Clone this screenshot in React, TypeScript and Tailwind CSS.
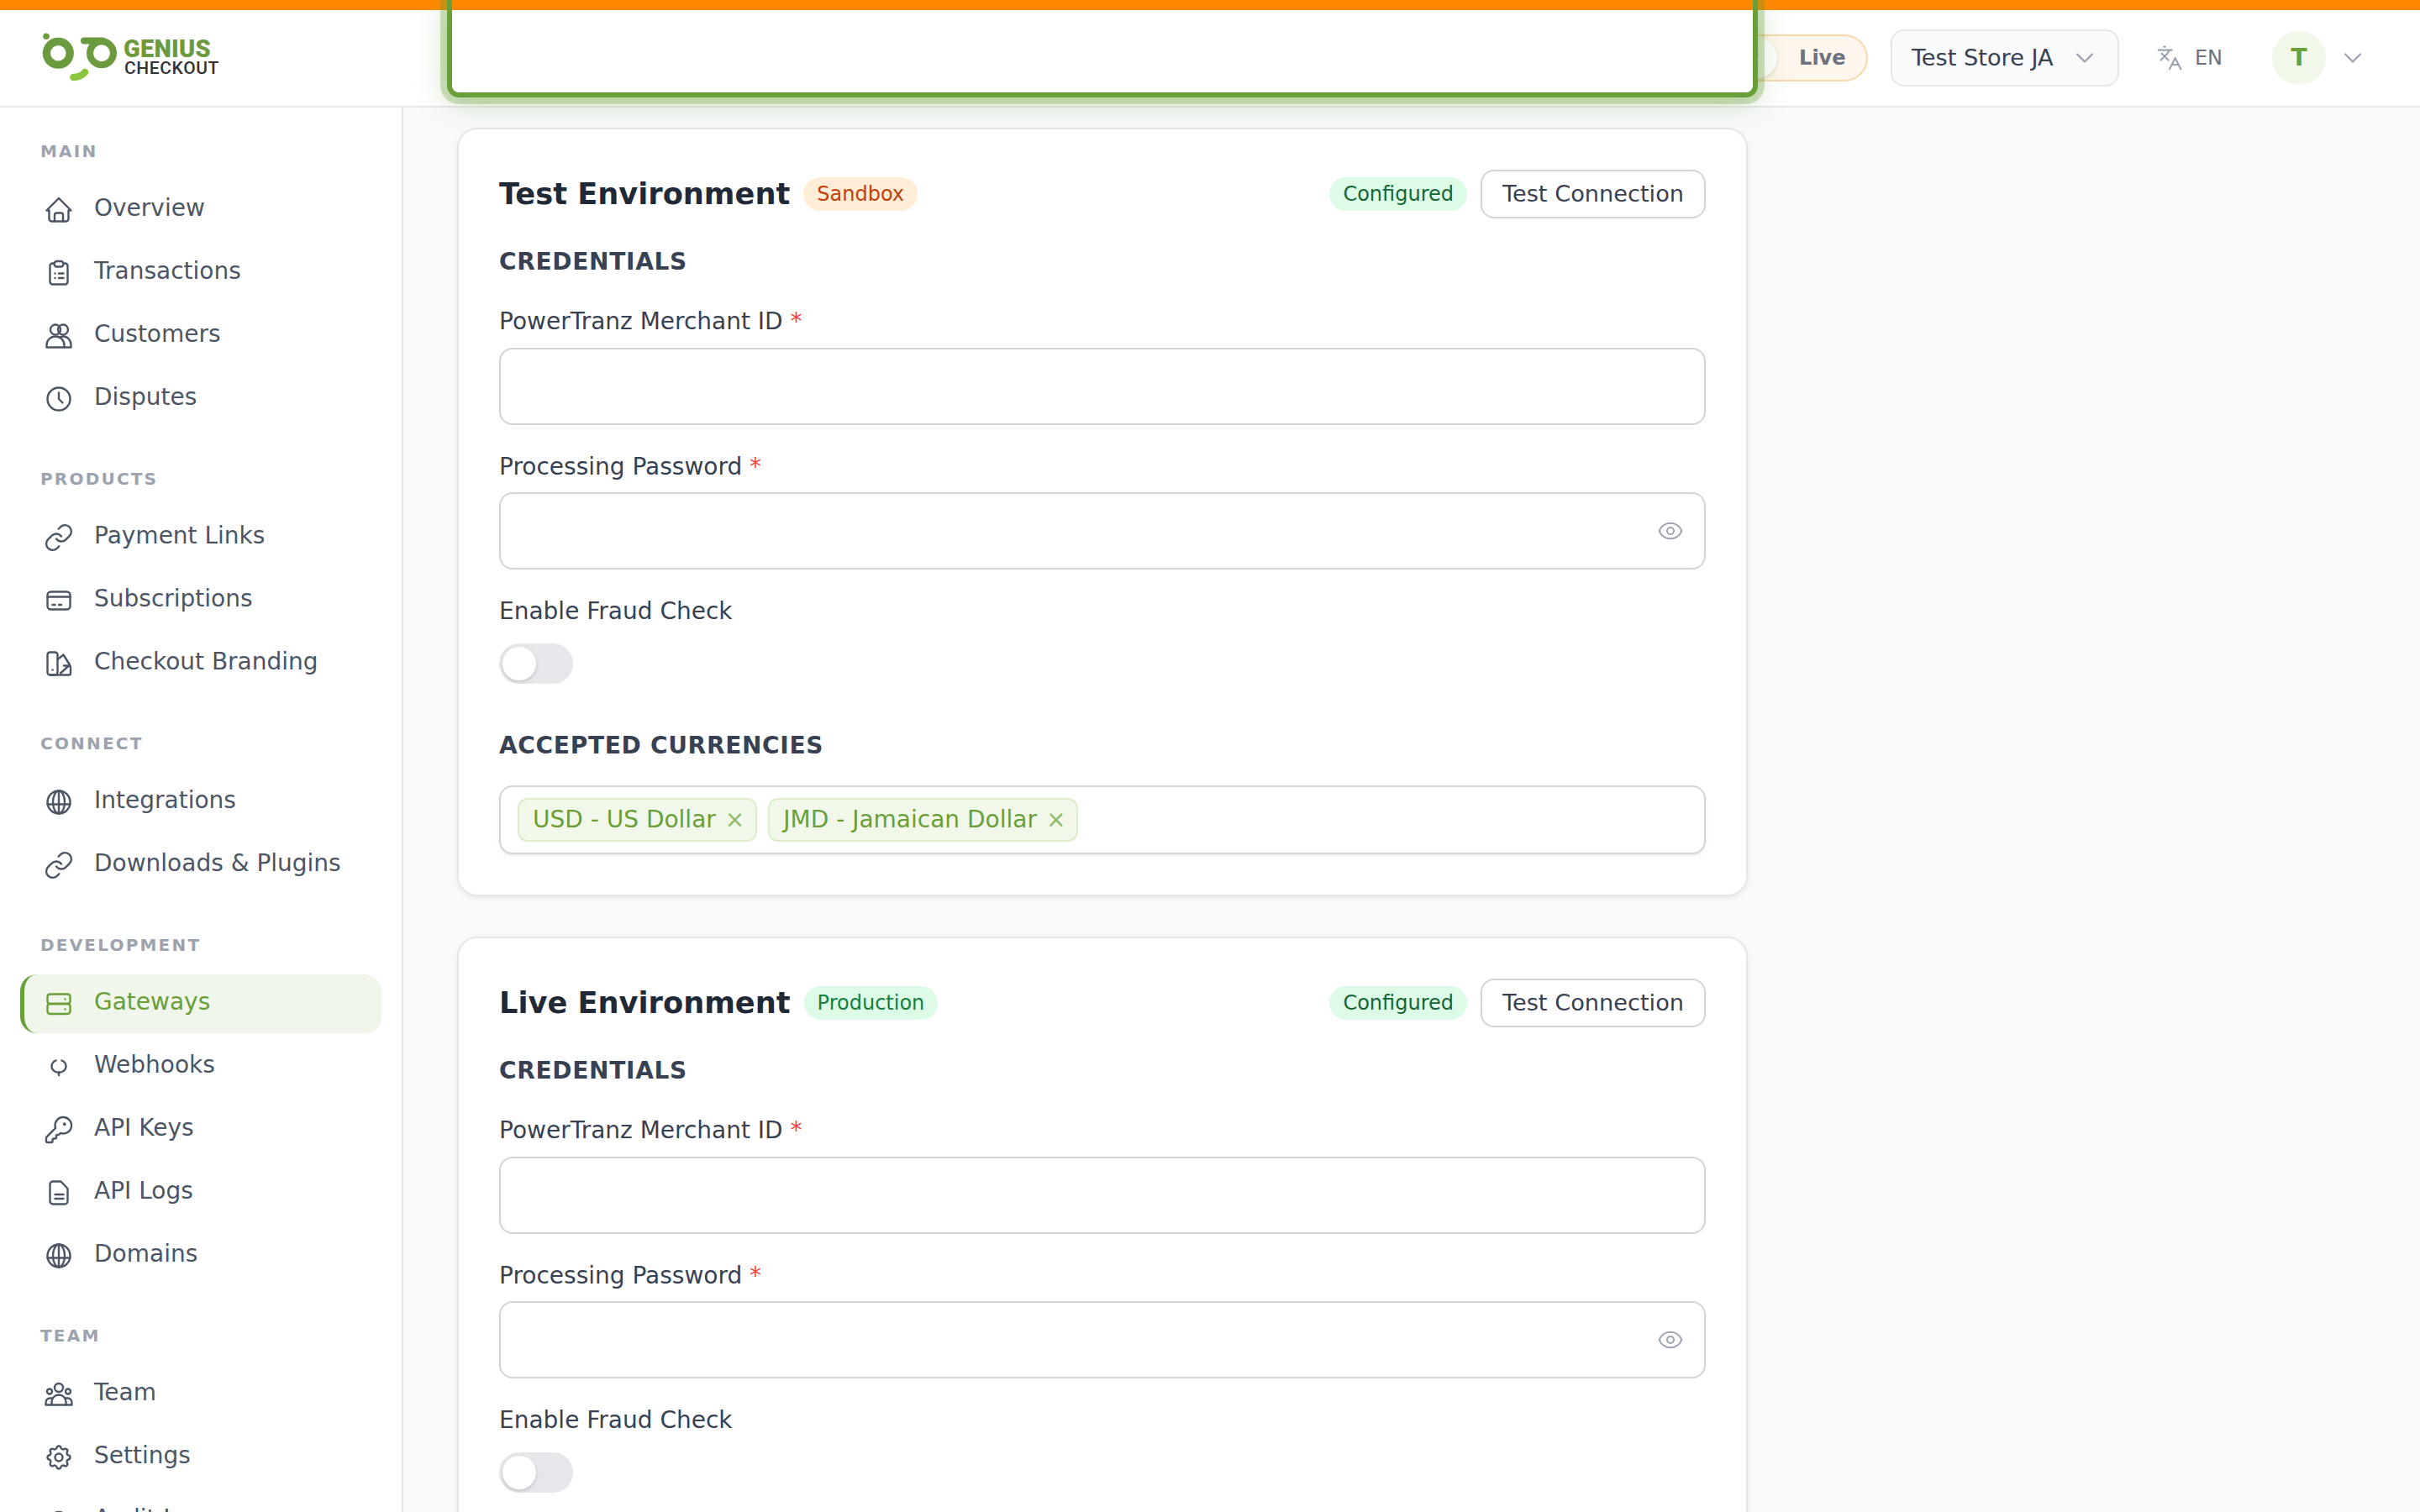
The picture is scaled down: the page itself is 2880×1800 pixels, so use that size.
import type { ReactNode } from "react";
import { ChevronDown, Eye, Languages, KeyRound, Link2 } from "lucide-react";
import { TbSettings } from "react-icons/tb";

function Ico({ children }: { children: ReactNode }) {
	return (
		<svg viewBox="0 0 36 36" className="h-9 w-9 shrink-0" fill="none" stroke="currentColor" strokeWidth="2.4" strokeLinecap="round" strokeLinejoin="round">
			{children}
		</svg>
	);
}

const HomeIcon = () => (
	<Ico>
		<path d="M3.5 18.5 18 4l14.500 14.500h-3v10a3 3 0 0 1-3 3h-17a3 3 0 0 1-3-3v-10z" />
		<path d="M13 31.500V24a2.500 2.500 0 0 1 2.500-2.500h5A2.500 2.500 0 0 1 23 24v7.500" />
	</Ico>
);
const ClipboardIcon = () => (
	<Ico>
		<path d="M12.500 6.500h-2a3 3 0 0 0-3 3v19a3 3 0 0 0 3 3h15a3 3 0 0 0 3-3v-19a3 3 0 0 0-3-3h-2" />
		<rect x="12.500" y="4" width="11" height="6.500" rx="3.200" />
		<path d="M13.500 18.500h.01M18 18.500h5.500M13.500 24h.01M18 24h5.500" />
	</Ico>
);
const UsersIcon = () => (
	<Ico>
		<circle cx="14" cy="10.500" r="6" />
		<circle cx="23" cy="10.500" r="6" />
		<path d="M3.500 31.500V29c0-6 4.500-10.500 10.500-10.500S24.500 23 24.500 29v2.500z" />
		<path d="M20 19.200c1-.5 2.500-.7 3.500-.7 5 0 9 4.500 9 10.500v2.500h-8" />
	</Ico>
);
const ClockIcon = () => (
	<Ico>
		<circle cx="18" cy="18" r="13.500" />
		<path d="M18 10.500V18l4.500 4.500" />
	</Ico>
);
const LinkIcon = () => <Link2 className="hidden" />;
const ChainIcon = () => (
	<svg viewBox="0 0 24 24" className="h-9 w-9 shrink-0" fill="none" stroke="currentColor" strokeWidth="1.6" strokeLinecap="round" strokeLinejoin="round">
		<path d="M10 13a5 5 0 0 0 7.540.54l3-3a5 5 0 0 0-7.070-7.070l-1.720 1.710" />
		<path d="M14 11a5 5 0 0 0-7.540-.54l-3 3a5 5 0 0 0 7.070 7.070l1.710-1.710" />
	</svg>
);
const CardIcon = () => (
	<Ico>
		<rect x="4.500" y="7.500" width="27" height="21" rx="4" />
		<path d="M4.500 13.500h27M10.500 23h3M18 23h3" />
	</Ico>
);
const SwatchIcon = () => (
	<Ico>
		<rect x="4.500" y="4.500" width="12" height="27" rx="3" />
		<path d="M16.500 13 23.500 7.500l7.500 12-11 10" />
		<path d="M24 20.500h6a2 2 0 0 1 2 2v7a2 2 0 0 1-2 2H8" />
		<path d="M10.500 25.500h.01" />
	</Ico>
);
const GlobeIcon = () => (
	<Ico>
		<circle cx="18" cy="18" r="13.500" />
		<ellipse cx="18" cy="18" rx="7" ry="13.500" />
		<path d="M4.500 20.500h27M18 4.500v27" />
	</Ico>
);
const ServerIcon = () => (
	<Ico>
		<rect x="4.500" y="6.500" width="27" height="11.500" rx="3" />
		<rect x="4.500" y="18" width="27" height="12" rx="3" />
		<path d="M25.500 12.500h.01M25.500 24.500h.01" />
	</Ico>
);
const HookIcon = () => (
	<Ico>
		<path d="M14.500 10.500c-3 1.200-5 3.800-5 7 0 4 3.500 7.300 8.500 7.300s8.500-3.300 8.500-7.300c0-3.200-2-5.800-5-7" />
		<path d="M18 24.500v3.500" />
	</Ico>
);
const KeyIcon = () => <KeyRound className="h-9 w-9 shrink-0" strokeWidth={1.6} />;
const FileIcon = () => (
	<Ico>
		<path d="M11 4.500h9.500l8 8.500v15a3.500 3.500 0 0 1-3.500 3.500H11A3.500 3.500 0 0 1 7.500 28V8A3.500 3.500 0 0 1 11 4.500z" />
		<path d="M13.500 20h10M13.500 25h10" />
	</Ico>
);
const TeamIcon = () => (
	<Ico>
		<circle cx="18" cy="10" r="5" />
		<circle cx="7" cy="14.500" r="3" />
		<circle cx="29" cy="14.500" r="3" />
		<path d="M9.500 30.500V27a8.500 8.500 0 0 1 17 0v3.500z" />
		<path d="M9.500 30.500h-7V28a5 5 0 0 1 5-5.500h3M26.500 30.500h7V28a5 5 0 0 0-5-5.500h-3" />
	</Ico>
);
const GearIcon = () => <TbSettings className="h-9 w-9 shrink-0" strokeWidth={1.6} />;
const AuditIcon = () => (
	<Ico>
		<circle cx="18" cy="18" r="10" />
	</Ico>
);

const NAV: Array<{ title: string; items: Array<{ label: string; icon: ReactNode; active?: boolean }> }> = [
	{
		title: "MAIN",
		items: [
			{ label: "Overview", icon: <HomeIcon /> },
			{ label: "Transactions", icon: <ClipboardIcon /> },
			{ label: "Customers", icon: <UsersIcon /> },
			{ label: "Disputes", icon: <ClockIcon /> },
		],
	},
	{
		title: "PRODUCTS",
		items: [
			{ label: "Payment Links", icon: <ChainIcon /> },
			{ label: "Subscriptions", icon: <CardIcon /> },
			{ label: "Checkout Branding", icon: <SwatchIcon /> },
		],
	},
	{
		title: "CONNECT",
		items: [
			{ label: "Integrations", icon: <GlobeIcon /> },
			{ label: "Downloads & Plugins", icon: <ChainIcon /> },
		],
	},
	{
		title: "DEVELOPMENT",
		items: [
			{ label: "Gateways", icon: <ServerIcon />, active: true },
			{ label: "Webhooks", icon: <HookIcon /> },
			{ label: "API Keys", icon: <KeyIcon /> },
			{ label: "API Logs", icon: <FileIcon /> },
			{ label: "Domains", icon: <GlobeIcon /> },
		],
	},
	{
		title: "TEAM",
		items: [
			{ label: "Team", icon: <TeamIcon /> },
			{ label: "Settings", icon: <GearIcon /> },
			{ label: "Audit Logs", icon: <AuditIcon /> },
		],
	},
];

function Logo() {
	return (
		<div className="flex items-center">
			<svg viewBox="0 0 94 62" className="h-[62px] w-[94px]" fill="none">
				<circle cx="5" cy="5.300" r="3.800" fill="#6c9a3e" />
				<circle cx="19.300" cy="25.300" r="13.900" stroke="#6c9a3e" strokeWidth="9.300" />
				<circle cx="71" cy="25.300" r="14" stroke="#6c9a3e" strokeWidth="8" />
				<path d="M50 10.500H72" stroke="#6c9a3e" strokeWidth="8" strokeLinecap="round" />
				<path d="M37.500 54C42 54 48 52 51 48" stroke="#8cc63f" strokeWidth="8.500" strokeLinecap="round" />
			</svg>
			<div className="ml-[3px] flex flex-col font-['Roboto',sans-serif] mb-[3px]">
				<span className="text-[29px] leading-[26px] font-black text-[#6c9a3e] tracking-[0.2px]">GENIUS</span>
				<span className="text-[21px] leading-[20px] font-medium text-[#333333] tracking-[0.6px] ml-[1px]">CHECKOUT</span>
			</div>
		</div>
	);
}

function Header() {
	return (
		<header className="flex h-[116px] shrink-0 items-center justify-between border-b-2 border-[#e5e7eb] bg-white pl-[50px] pr-[62px]">
			<Logo />
			<div className="flex items-center">
				<div className="flex h-14 w-[211px] items-center rounded-full border-2 border-[#fed7aa] bg-[#fff7ed] p-[2px]">
					<span className="flex h-12 items-center rounded-full bg-white px-[22px] text-[24px] font-bold text-[#c2410c] shadow-[0_2px_4px_rgba(0,0,0,0.12)]">Test</span>
					<span className="px-[26px] text-[24px] font-bold text-[#6b7280]">Live</span>
				</div>
				<div className="ml-[27px] flex h-[68px] w-[272px] items-center justify-between rounded-[16px] border-2 border-[#e5e7eb] bg-[#f9fafb] pl-[23px] pr-[21px] text-[27.2px] text-[#374151]">
					Test Store JA
					<ChevronDown className="h-9 w-9 text-[#9ca3af]" strokeWidth={1.5} />
				</div>
				<div className="ml-[44px] flex items-center gap-[14px] text-[24px] text-[#6b7280]">
					<Languages className="h-8 w-8 text-[#9ca3af]" strokeWidth={1.6} />
					EN
				</div>
				<div className="ml-[59px] flex h-16 w-16 items-center justify-center rounded-full bg-[#f1f8e9] text-[28px] font-bold text-[#689f38]">T</div>
				<ChevronDown className="ml-[14px] h-9 w-9 text-[#9ca3af]" strokeWidth={1.5} />
			</div>
		</header>
	);
}

function Sidebar() {
	return (
		<aside className="w-[480px] shrink-0 overflow-hidden border-r-2 border-[#e5e7eb] bg-white pt-9">
			{NAV.map((section) => (
				<div key={section.title} className="mb-[44px]">
					<div className="mb-[19px] h-8 pl-12 text-[20px] leading-8 font-bold tracking-[0.11em] text-[#9ca3af]">{section.title}</div>
					<div className="flex flex-col gap-[5px]">
						{section.items.map((item) => (
							<div
								key={item.label}
								className={
									item.active
										? "mx-6 flex h-[70px] shrink-0 items-center gap-6 rounded-[20px] border-l-[5px] border-[#689f38] bg-[#f0f6ea] pl-[23px] text-[28px] text-[#689f38]"
										: "mx-6 flex h-[70px] shrink-0 items-center gap-6 rounded-[20px] border-l-[5px] border-transparent pl-[23px] text-[28px] text-[#4b5563]"
								}
							>
								{item.icon}
								<span className="-mt-[5px]">{item.label}</span>
							</div>
						))}
					</div>
				</div>
			))}
		</aside>
	);
}

function FieldLabel({ children }: { children: ReactNode }) {
	return <label className="block text-[28px] leading-[42px] text-[#374151]">{children}</label>;
}

function Required() {
	return <span className="text-[#ef4444]"> *</span>;
}

function Chip({ children }: { children: ReactNode }) {
	return (
		<span className="flex h-[52px] items-center rounded-[12px] border-2 border-[#dcedc8] bg-[#f1f8e9] pl-4 pr-[13px] text-[28px] text-[#689f38]">
			{children}
			<span className="ml-[11px] text-[#689f38] opacity-70">×</span>
		</span>
	);
}

function EnvCard({ title, badge, badgeClass }: { title: string; badge: string; badgeClass: string }) {
	return (
		<section className="w-[1536px] shrink-0 rounded-[24px] border-2 border-[#e5e7eb] bg-white px-12 pb-[48px] pt-12 shadow-[0_2px_6px_rgba(0,0,0,0.08)]">
			<div className="flex h-[58px] items-center justify-between">
				<div className="flex items-center gap-4">
					<h2 className="text-[35.2px] font-bold text-[#1f2937]">{title}</h2>
					<span className={badgeClass}>{badge}</span>
				</div>
				<div className="flex items-center gap-4">
					<span className="flex h-10 items-center rounded-full bg-[#dcfce7] px-4 text-[24px] text-[#166534]">Configured</span>
					<button className="flex h-[58px] items-center rounded-[16px] border-2 border-[#d1d5db] bg-white px-6 text-[27.2px] text-[#374151]">Test Connection</button>
				</div>
			</div>
			<h3 className="mt-[31px] text-[28px] leading-[42px] font-bold tracking-wide text-[#374151]">CREDENTIALS</h3>
			<div className="mt-[29px]">
				<FieldLabel>
					PowerTranz Merchant ID
					<Required />
				</FieldLabel>
				<div className="mt-[10px] h-[92px] rounded-[16px] border-2 border-[#d1d5db] bg-white" />
			</div>
			<div className="mt-[29px]">
				<FieldLabel>
					Processing Password
					<Required />
				</FieldLabel>
				<div className="mt-[9px] flex h-[92px] items-center justify-end rounded-[16px] border-2 border-[#d1d5db] bg-white pr-6">
					<Eye className="h-8 w-8 text-[#9ca3af]" strokeWidth={1.5} />
				</div>
			</div>
			<div className="mt-[29px]">
				<FieldLabel>Enable Fraud Check</FieldLabel>
				<div className="mt-[17px] flex h-12 w-[88px] items-center rounded-full bg-[#e5e7eb] pl-1">
					<div className="h-10 w-10 rounded-full bg-white shadow-[0_2px_4px_rgba(0,0,0,0.15)]" />
				</div>
			</div>
			<h3 className="mt-[53px] text-[28px] leading-[42px] font-bold tracking-wide text-[#374151]">ACCEPTED CURRENCIES</h3>
			<div className="mt-[26px] flex h-[82px] items-center gap-[13px] rounded-[16px] border-2 border-[#d1d5db] bg-white px-5 shadow-[0_2px_4px_rgba(0,0,0,0.08)]">
				<Chip>USD - US Dollar</Chip>
				<Chip>JMD - Jamaican Dollar</Chip>
			</div>
		</section>
	);
}

export default function App() {
	return (
		<div className="relative flex h-screen flex-col overflow-hidden bg-[#f9fafb] font-['DejaVu_Sans',sans-serif]">
			<div className="h-3 shrink-0 bg-[#ff8800]" />
			<Header />
			<div className="flex min-h-0 flex-1">
				<Sidebar />
				<main className="flex flex-1 flex-col gap-12 overflow-hidden pl-16 pt-6">
					<EnvCard title="Test Environment" badge="Sandbox" badgeClass="flex h-10 items-center rounded-full bg-[#ffedd5] px-4 text-[24px] text-[#c2410c]" />
					<EnvCard title="Live Environment" badge="Production" badgeClass="flex h-10 items-center rounded-full bg-[#dcfce7] px-4 text-[24px] text-[#15803d]" />
				</main>
			</div>
			{/* focused field sticking in from above the scrolled page */}
			<div className="absolute left-[532px] top-0 h-[116px] w-[1560px] rounded-b-[14px] border-x-[6px] border-b-[6px] border-[#689f38] bg-white shadow-[0_0_0_8px_rgba(104,159,56,0.3),0_6px_36px_rgba(104,159,56,0.35)]">
				<div className="h-3 bg-[#ff8800]" />
			</div>
		</div>
	);
}
